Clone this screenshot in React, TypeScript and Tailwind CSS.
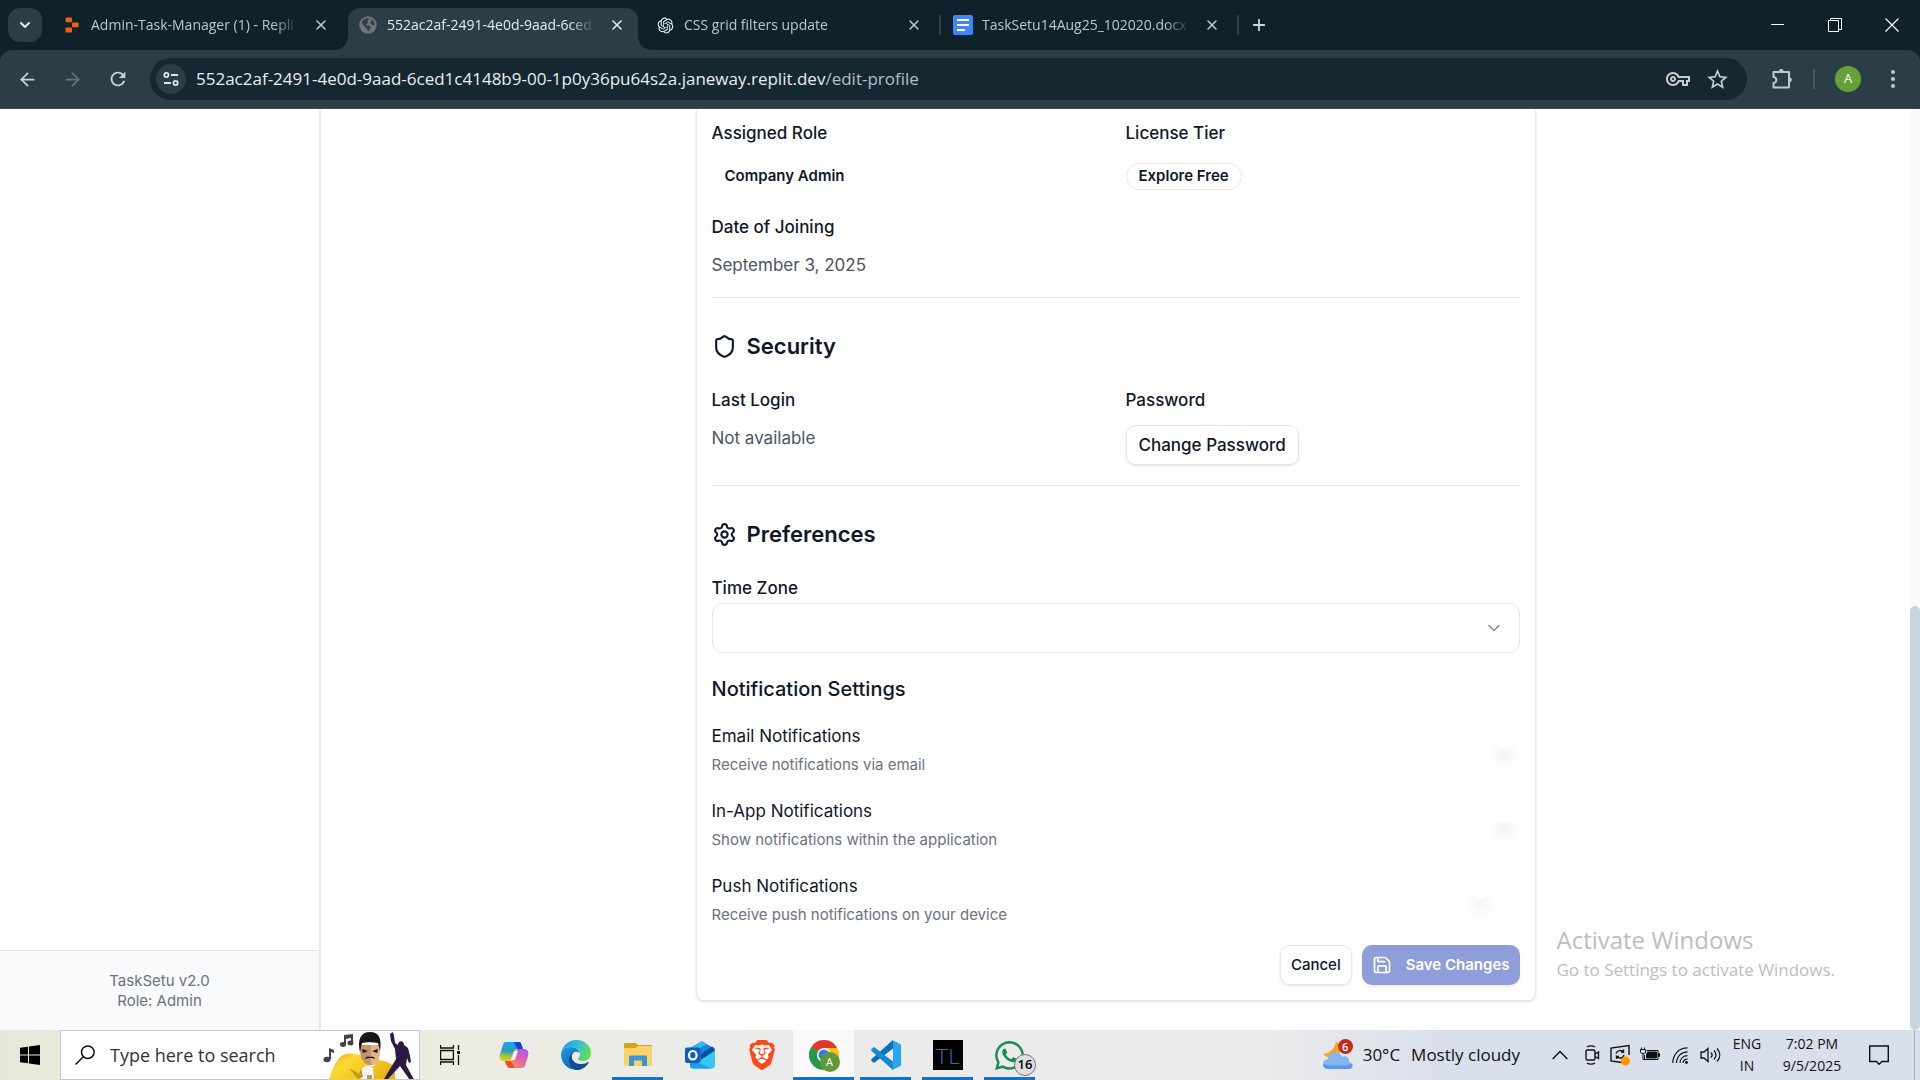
import React, { useState } from "react";
import { ArrowLeft, ArrowRight, ChevronDown, Save, Settings, Shield, X, Plus } from "lucide-react";
import { MdOutlineVpnKey, MdRefresh, MdStarBorder } from "react-icons/md";
import { FaWhatsapp } from "react-icons/fa";
import { RiOpenaiFill } from "react-icons/ri";
import { SiBrave } from "react-icons/si";

const ui = "font-['Open_Sans','Noto_Sans',sans-serif]";

/* ---------- browser icons ---------- */

function ReplitIcon() {
  return (
    <svg viewBox="0 0 14 16" className="h-4 w-[14px] shrink-0" fill="#f26207">
      <rect x="0.5" y="0.5" width="6.5" height="4.8" rx="1" />
      <rect x="7" y="5.5" width="6.5" height="4.8" rx="1" />
      <rect x="0.5" y="10.6" width="6.5" height="4.8" rx="1" />
    </svg>
  );
}

function GlobeIcon() {
  return (
    <svg viewBox="0 0 18 18" className="size-[18px] shrink-0">
      <circle cx="9" cy="9" r="8.7" fill="#6e7478" />
      <path d="M3 6.500C4 4 6 2.400 8.600 2.200L9.800 3.600 8.400 5.400 8.800 7 6.800 8.400 7.400 9.600 10.600 9.800 12 11.400 10.400 13 9.800 15.600C8.300 15.200 8.500 13 7.600 12.200 6.400 11 4 9.400 3 6.500Z" fill="#2b3d47" />
      <path d="M12.400 3.200C14.400 4.400 15.600 6.400 15.700 8.800L14 9.600 12.400 8 11 7.200 12.800 5.600Z" fill="#2b3d47" />
    </svg>
  );
}

function DocsIcon() {
  return (
    <svg viewBox="0 0 20 20" className="size-5 shrink-0">
      <rect width="20" height="20" rx="2" fill="#4285f4" />
      <path d="M4 5h12M4 10h12M4 15h8" stroke="#fff" strokeWidth="2.2" />
    </svg>
  );
}

function TuneIcon() {
  return (
    <svg viewBox="0 0 16 16" className="size-4" fill="none" stroke="#dce5ea" strokeWidth="1.8">
      <circle cx="3.4" cy="4" r="2.1" />
      <path d="M8 4h7M1 12h7" />
      <circle cx="12.6" cy="12" r="2.1" />
    </svg>
  );
}

function PuzzleIcon() {
  return (
    <svg viewBox="0 0 22 22" className="size-[22px]" fill="none" stroke="#b9ccd6" strokeWidth="2" strokeLinejoin="round">
      <path d="M2.500 4H18v15.500H2.500V15c3.800-.4 3.800-5.600 0-6Z" />
      <path d="M7.900 3.500a2.400 2.400 0 0 1 4.800 0ZM18.500 9.400a2.400 2.400 0 0 1 0 4.800Z" fill="#b9ccd6" stroke="none" />
    </svg>
  );
}

/* ---------- browser frame ---------- */

type TabProps = { icon: React.ReactNode; title: string; active?: boolean; divider?: boolean };

function Tab({ icon, title, active, divider }: TabProps) {
  return (
    <div
      className={
        active
          ? "relative mt-2 flex h-[42px] w-[290px] items-center rounded-t-xl bg-[#2b3d47] pr-[11px] pl-[10px] text-[#e3ebef]"
          : "relative mt-2 flex h-[42px] w-[298px] items-center pr-[17px] pl-[12px] text-[#b7c8d1]"
      }
    >
      {active && (
        <>
          <span className="absolute bottom-0 -left-3 size-3 bg-[radial-gradient(circle_at_0_0,transparent_11px,#2b3d47_12px)]" />
          <span className="absolute -right-3 bottom-0 size-3 bg-[radial-gradient(circle_at_100%_0,transparent_11px,#2b3d47_12px)]" />
        </>
      )}
      <span className="mb-2 flex w-5 shrink-0 justify-center">{icon}</span>
      <span className="mr-3 mb-2 ml-[9px] min-w-0 flex-1 overflow-hidden text-sm leading-5 whitespace-nowrap [mask-image:linear-gradient(to_right,black_88%,transparent)]">
        {title}
      </span>
      <button aria-label="Close tab" className="mb-2 flex size-5 items-center justify-center">
        <X size={16} strokeWidth={2.4} />
      </button>
      {divider && <span className="absolute top-[7px] right-0 h-5 w-0.5 rounded bg-[#2f434d]" />}
    </div>
  );
}

function TabStrip() {
  return (
    <div className="flex h-[50px] bg-[#0f222b]">
      <button aria-label="Search tabs" className="mt-2 ml-2 flex h-[34px] w-[34px] shrink-0 items-center justify-center rounded-xl bg-[#2b3d47]">
        <ChevronDown size={16} strokeWidth={3} color="#e3ebef" />
      </button>
      <div className="ml-2 flex">
        <Tab icon={<ReplitIcon />} title="Admin-Task-Manager (1) - Repli" />
        <Tab icon={<GlobeIcon />} title="552ac2af-2491-4e0d-9aad-6ced" active />
        <div className="w-[5px]" />
        <Tab icon={<RiOpenaiFill size={19} color="#eef2f4" />} title="CSS grid filters update" divider />
        <Tab icon={<DocsIcon />} title="TaskSetu14Aug25_102020.docx" divider />
      </div>
      <button aria-label="New tab" className="mt-[15px] ml-[10px] flex size-5 items-center justify-center text-[#c9d7de]">
        <Plus size={18} strokeWidth={2.4} />
      </button>
      <div className="ml-auto flex h-[50px] items-center">
        <button aria-label="Minimize" className="flex h-full w-[57px] items-center justify-center">
          <svg viewBox="0 0 14 14" className="size-[14px]" stroke="#fff"><path d="M0 6.500h13" /></svg>
        </button>
        <button aria-label="Restore" className="flex h-full w-[57px] items-center justify-center">
          <svg viewBox="0 0 14 14" className="size-[14px]" fill="none" stroke="#fff"><path d="M.5 2.500h10v11H.5zM2.500 2.500v-2h11v11h-3" /></svg>
        </button>
        <button aria-label="Close window" className="flex h-full w-[57px] items-center justify-center">
          <svg viewBox="0 0 14 14" className="size-[14px]" stroke="#fff" strokeWidth="1.200"><path d="M.5.5l13 13M13.500.5l-13 13" /></svg>
        </button>
      </div>
    </div>
  );
}

function Toolbar() {
  return (
    <div className="bg-[#0f222b]">
      <div className="flex h-[59px] items-center rounded-t-xl border-b border-[#454a50] bg-[#2b3d47]">
        <div className="flex w-[150px] items-center gap-6 pl-[17px]">
          <button aria-label="Back"><ArrowLeft size={21} color="#c4d4dc" /></button>
          <button aria-label="Forward"><ArrowRight size={21} color="#64757e" /></button>
          <button aria-label="Reload"><MdRefresh size={22} color="#c4d4dc" /></button>
        </div>
        <div className="flex h-[42px] flex-1 items-center rounded-full bg-[#152831] pr-[17px] pl-[6px]">
          <button aria-label="View site information" className="flex size-[30px] items-center justify-center rounded-full bg-[#2b3d47]">
            <TuneIcon />
          </button>
          <span className="ml-[10px] flex-1 text-[17px] leading-6 text-[#e8eef1]">
            552ac2af-2491-4e0d-9aad-6ced1c4148b9-00-1p0y36pu64s2a.janeway.replit.dev<span className="text-[#b6bfc4]">/edit-profile</span>
          </span>
          <button aria-label="Passwords"><MdOutlineVpnKey size={24} color="#c7cdd1" /></button>
          <button aria-label="Bookmark" className="ml-[15px]"><MdStarBorder size={25} color="#c7cdd1" /></button>
        </div>
        <div className="flex w-[173px] items-center">
          <button aria-label="Extensions" className="ml-6"><PuzzleIcon /></button>
          <span className="ml-[20px] h-5 w-0.5 bg-[#435965]" />
          <button aria-label="Profile" className="ml-5 flex size-[26px] items-center justify-center rounded-full bg-[#679f38] text-[13px] text-white">A</button>
          <button aria-label="Menu" className="ml-[22px]">
            <svg viewBox="0 0 20 20" className="size-5" fill="#b9ccd6"><circle cx="10" cy="3" r="2" /><circle cx="10" cy="10" r="2" /><circle cx="10" cy="17" r="2" /></svg>
          </button>
        </div>
      </div>
    </div>
  );
}

/* ---------- profile page ---------- */

function Toggle({ id, initial }: { id: string; initial: boolean }) {
  const [on, setOn] = useState(initial);
  return (
    <button
      id={id}
      role="switch"
      aria-checked={on}
      onClick={() => setOn(!on)}
      className={on ? "flex h-[30px] w-[55px] items-center justify-end rounded-full px-[3px]" : "flex h-[30px] w-[55px] items-center rounded-full px-[3px]"}
    >
      <span className="size-[25px] rounded-full bg-white shadow-[0_25px_16px_4px_rgba(0,0,0,0.012),0_18px_10px_-3px_rgba(0,0,0,0.03)]" />
    </button>
  );
}

const notifications = [
  { id: "email", title: "Email Notifications", note: "Receive notifications via email", on: true },
  { id: "in-app", title: "In-App Notifications", note: "Show notifications within the application", on: true },
  { id: "push", title: "Push Notifications", note: "Receive push notifications on your device", on: false },
];

const label = "text-[17px] leading-6 font-medium";
const value = "text-[17px] leading-6 text-[#4b5563]";
const heading = "flex items-center gap-[10px] text-[22px] leading-8 font-semibold";

function ProfileCard() {
  return (
    <div className="mx-auto w-full max-w-[840px] rounded-b-lg border border-t-0 border-[#e5e7eb] bg-white px-[15px] pt-3 pb-[15px] shadow-sm">
      <div className="grid grid-cols-2 gap-x-5">
        <div>
          <p className={label}>Assigned Role</p>
          <span className="mt-[18px] inline-flex h-[27px] items-center px-[13px] text-[15px] font-semibold">Company Admin</span>
        </div>
        <div>
          <p className={label}>License Tier</p>
          <span className="mt-[18px] inline-flex h-[27px] items-center rounded-full border border-[#e5e7eb] px-3 text-[15px] font-semibold">Explore Free</span>
        </div>
      </div>
      <p className={`mt-[25px] ${label}`}>Date of Joining</p>
      <p className={`mt-[14px] ${value}`}>September 3, 2025</p>
      <hr className="mt-5 border-[#e5e7eb]" />

      <h2 className={`mt-8 ${heading}`}><Shield size={25} />Security</h2>
      <div className="mt-[26px] grid grid-cols-2 gap-x-5">
        <div>
          <p className={label}>Last Login</p>
          <p className={`mt-[14px] ${value}`}>Not available</p>
        </div>
        <div>
          <p className={label}>Password</p>
          <button className="mt-[13px] flex h-10 items-center rounded-[10px] border border-[#e5e7eb] px-3 pt-0.5 text-[17px] font-medium shadow-sm">Change Password</button>
        </div>
      </div>
      <hr className="mt-5 border-[#e5e7eb]" />

      <h2 className={`mt-8 ${heading}`}><Settings size={25} />Preferences</h2>
      <label htmlFor="tz" className={`mt-[26px] block ${label}`}>Time Zone</label>
      <div className="relative mt-[3px]">
        <select id="tz" defaultValue="" className="h-[50px] w-full appearance-none rounded-[10px] border border-[#e5e7eb] bg-white px-4 text-[17px]">
          <option value="" />
          <option value="UTC">UTC</option>
        </select>
        <ChevronDown size={20} strokeWidth={1.8} color="#858a94" className="pointer-events-none absolute top-[15px] right-4" />
      </div>
      <h3 className="mt-[22px] text-xl leading-7 font-medium">Notification Settings</h3>
      <div className="mt-[17px] flex flex-col gap-5">
        {notifications.map((n) => (
          <div key={n.id} className="flex items-start justify-between">
            <div className="pt-1">
              <label htmlFor={n.id} className="block text-[17px] leading-6">{n.title}</label>
              <p className="mt-[7px] text-[15px] leading-5 text-[#6b7280]">{n.note}</p>
            </div>
            <Toggle id={n.id} initial={n.on} />
          </div>
        ))}
      </div>
      <div className="mt-5 flex justify-end gap-[10px]">
        <button className="flex h-10 items-center rounded-[10px] border border-[#e5e7eb] px-[10px] text-[15px] font-medium shadow-sm">Cancel</button>
        <button className="flex h-10 items-center gap-[14px] rounded-[10px] bg-[#8f9ed8] px-[10px] text-[15px] font-semibold text-white shadow-md shadow-black/5">
          <Save size={20} />
          Save Changes
        </button>
      </div>
    </div>
  );
}

function Page() {
  return (
    <div className="relative flex min-h-0 flex-1 overflow-hidden bg-white font-['Inter',sans-serif] text-[#0f172a]">
      <aside className="flex w-[321px] shrink-0 flex-col border-r-2 border-[#e5e7eb] bg-white">
        <div className="flex-1" />
        <div className="flex h-20 flex-col items-center justify-center border-t border-[#e5e7eb] bg-[#f8fafc] text-[15px] leading-5 text-[#6b7280]">
          <p>TaskSetu v2.0</p>
          <p>Role: Admin</p>
        </div>
      </aside>
      <main className="flex-1 bg-white">
        <ProfileCard />
      </main>
      <div className="flex w-[10px] shrink-0 flex-col justify-end bg-[#f8fafc]">
        <div className="h-[46%] rounded-full bg-[#cbd5e1]" />
      </div>
      <div className={`absolute right-[85px] bottom-[46px] text-[#bdbdbd] ${ui}`}>
        <p className="text-2xl leading-8">Activate Windows</p>
        <p className="text-[17px] leading-7">Go to Settings to activate Windows.</p>
      </div>
    </div>
  );
}

/* ---------- taskbar ---------- */

function SearchArt() {
  return (
    <svg viewBox="0 0 96 48" className="h-12 w-24 shrink-0">
      <defs>
        <linearGradient id="jacket" x1="0" y1="0" x2="1" y2="0.500"><stop offset="0" stopColor="#e0a80c" /><stop offset=".35" stopColor="#fbd936" /><stop offset="1" stopColor="#eab612" /></linearGradient>
      </defs>
      <g fill="#46404f">
        <ellipse cx="4" cy="28.500" rx="3.500" ry="2.700" /><path d="M6 28V17l5 2v3l-3-1v7Z" />
        <ellipse cx="20" cy="13.500" rx="3" ry="2.400" /><ellipse cx="27.500" cy="12" rx="3" ry="2.400" /><path d="M21 13V4l9-1v9h-2V7l-5 1v5Z" />
      </g>
      <path d="M6 48C10 37 14 27 20 24c6-3 13-1 19 1l5 8 6 3 5-7c9 1 15 4 17 8v11Z" fill="url(#jacket)" />
      <path d="M37 48l2-11 6-3 5 3 1 11Z" fill="#f4f2f6" />
      <path d="M26 37l10 6 2-5 2 8-5 2Z" fill="#c9960a" />
      <path d="M44 44h5v4h-5Z" fill="#b9a23c" />
      <path d="M37 14h19c1 8 1 14-3 18-3 3-8 3-11 0-5-4-5-10-5-18Z" fill="#c79368" />
      <path d="M48 14h8c1 8 1 14-3 18-2 1-3 2-5 2Z" fill="#e0b488" />
      <path d="M37 21C34 8 38 1 47 1s12 6 10 19l-2-8c-5-1-12-1-16 0Z" fill="#18151a" />
      <path d="M39 18l6 2-5 2ZM55 18l-6 2 5 2ZM42 28c1-3 3-3 5-2 2-1 4-1 5 2l-3-1h-4Z" fill="#1a1416" />
      <path d="M67 3l3-2 1 4 1 7 3 2c0-5 6-5 6 0l4 3 2 8 1 6-2 1-2-5-1 7 10 18h-4L77 35 65 48h-4l12-20-1-10-4-8Z" fill="#2b1b42" />
    </svg>
  );
}

function CopilotIcon() {
  return (
    <svg viewBox="0 0 30 28" className="h-7 w-[30px]">
      <defs>
        <linearGradient id="cpA" x1="0.3" y1="0" x2="0.2" y2="1"><stop offset="0" stopColor="#1ba4f0" /><stop offset=".45" stopColor="#2a9bc0" /><stop offset=".75" stopColor="#9fc93a" /><stop offset="1" stopColor="#f5c826" /></linearGradient>
        <linearGradient id="cpB" x1="0.8" y1="0" x2="0.3" y2="1"><stop offset="0" stopColor="#a55af0" /><stop offset=".5" stopColor="#e85fa8" /><stop offset="1" stopColor="#ff8f50" /></linearGradient>
      </defs>
      <path d="M7 1h13c2 0 2 2 3 4l1 3h-5c-3 0-4 2-5 6l-2 6H5c-4 0-5-3-4-7L4 4c.5-2 1-3 3-3Z" fill="url(#cpA)" />
      <path d="M14 1h6c2 0 2 2 3 4l1 3h-5c-2 0-3-7-5-7Z" fill="#1846c8" />
      <path d="M23 27H11c-2 0-3-2-4-4l-1-3h5c3 0 4-2 5-6l2-6h7c4 0 5 3 4 7l-3 9c-.5 2-1 3-3 3Z" fill="url(#cpB)" />
      <path d="M6 20h5c2 0 3 7 6 7h-6c-2 0-3-2-4-4Z" fill="#e8502e" />
      <path d="M15 10h4l-3 9h-4Z" fill="#eeeeec" />
    </svg>
  );
}

function EdgeIcon() {
  return (
    <svg viewBox="0 0 30 30" className="size-[30px]">
      <defs>
        <linearGradient id="edT" x1="0" y1="0.300" x2="1" y2="0.600"><stop offset="0" stopColor="#1b9de2" /><stop offset=".5" stopColor="#35c1d0" /><stop offset="1" stopColor="#66e04a" /></linearGradient>
        <linearGradient id="edL" x1="0" y1="0" x2="0.600" y2="1"><stop offset="0" stopColor="#1a9be0" /><stop offset="1" stopColor="#0f62b4" /></linearGradient>
      </defs>
      <path d="M.5 12C2 5 8 0 15 0c9 0 15 6 15 13 0 5-4 8-8 8-3 0-5-1-5-2s2-2 2-5c0-4-4-7-9-7-5 0-8 2-9.500 5Z" fill="url(#edT)" />
      <path d="M0 15C0 10 4 7 9.500 7c5 0 9 3 9 6-4-3-8 0-8 5 0 5 4 9 9 11A15 15 0 0 1 0 15Z" fill="url(#edL)" />
      <path d="M12 13c-3 3-1 11 8 11 3 0 6-1 7-2 .6-.3 1 .1.700.7C25 27 21 30 16 30c-5-1-8-6-8-10 0-3 2-6 4-7Z" fill="#124c8d" />
    </svg>
  );
}

function FolderIcon() {
  return (
    <svg viewBox="0 0 28 24" className="h-6 w-7">
      <path d="M0 1.500C0 .6.6 0 1.500 0H12l2 2h12.500c.9 0 1.500.6 1.500 1.500V22H0Z" fill="#e2a00a" />
      <path d="M0 5h11l3-2h12.500c.9 0 1.500.6 1.500 1.500V21.500c0 .9-.6 1.500-1.500 1.500h-25C.6 23 0 22.400 0 21.500Z" fill="#fdd367" />
      <path d="M5 23V14c0-1 .6-1.600 1.600-1.600h14.800c1 0 1.600.6 1.600 1.600v9h-5v-5.500h-8V23Z" fill="#3d94d6" />
    </svg>
  );
}

function OutlookIcon() {
  return (
    <svg viewBox="0 0 30 28" className="h-7 w-[30px]">
      <path d="M5 7 15 1.200c1.300-.9 2.500-.9 3.800 0L29 7.500l1 2.500-14 10H5Z" fill="#1c84dc" />
      <path d="M5 7 15 1.200c1.300-.9 2.500-.9 3.800 0L22 3 10 10Z" fill="#35b8f1" />
      <path d="M16 13 27 5.500l2 1.500c1 .8 1 2 0 3L16 19Z" fill="#0a4ea2" />
      <path d="M30 10v14.500c0 2-1 3-3 3H8c-2 0-3-1-3-3V20h9Z" fill="#35c8f2" />
      <path d="M5 22h9l13 5.500H8c-2 0-3-1-3-3Z" fill="#1aa0ea" />
      <rect y="6.500" width="15.500" height="15.500" rx="2" fill="#0f5fbf" />
      <ellipse cx="7.800" cy="14.200" rx="3.800" ry="4.200" fill="none" stroke="#fff" strokeWidth="2.200" />
    </svg>
  );
}

function BraveIcon() {
  return (
    <span className="relative flex items-center justify-center">
      <span className="absolute size-4 rounded-full bg-white" />
      <SiBrave size={30} color="#fb4a1c" className="relative" />
    </span>
  );
}

function ChromeIcon() {
  return (
    <span className="relative">
      <svg viewBox="0 0 30 30" className="size-[30px]">
        <path d="M15 15 2 7.500A15 15 0 0 1 28 7.500Z" fill="#dc3b2e" />
        <path d="M15 15 28 7.500A15 15 0 0 1 15 30Z" fill="#fbc116" />
        <path d="M15 15 15 30A15 15 0 0 1 2 7.500Z" fill="#27984a" />
        <path d="M15 8h13.300L21.500 19Z" fill="#fbc116" />
        <path d="M2 7.500 8.700 18.500 15 15Z" fill="#27984a" />
        <circle cx="15" cy="15" r="7" fill="#fff" />
        <circle cx="15" cy="15" r="5.500" fill="#3b78e7" />
      </svg>
      <span className="absolute -right-px -bottom-0.5 flex size-5 items-center justify-center rounded-full bg-[#5f9a38] text-[11px] text-white">A</span>
    </span>
  );
}

function CodeIcon() {
  return (
    <svg viewBox="0 0 30 30" className="size-[30px]">
      <path d="M22 8.500 4 22.300c-.6.500-1.400.4-1.900 0L.6 20.900c-.6-.6-.6-1.500 0-2L22 0Z" fill="#0b72b9" />
      <path d="M22 21.500 4 7.700c-.6-.5-1.400-.4-1.900 0L.6 9.100c-.6.6-.6 1.500 0 2L22 30Z" fill="#1689d0" />
      <path d="M21.500.3 29 3.800c.6.300 1 .9 1 1.600v19.200c0 .7-.4 1.300-1 1.600l-7.500 3.500c-.8.300-1.400.2-2-.4 1 .9 2.500.2 2.500-1.200V1.900C22 .6 20.500-.1 19.500.8c.6-.6 1.200-.8 2-.5Z" fill="#29a6f2" />
    </svg>
  );
}

function AppButton({ name, open, active, children }: { name: string; open?: boolean; active?: boolean; children: React.ReactNode }) {
  return (
    <button
      aria-label={name}
      className={
        active
          ? "relative flex h-full w-[61px] items-center justify-center bg-white/70"
          : "relative flex h-full w-[51px] items-center justify-center"
      }
    >
      {children}
      {open && <span className="absolute inset-x-0 bottom-0 h-[3px] bg-[#0078d7]" />}
    </button>
  );
}

function Taskbar() {
  return (
    <footer className={`flex h-[50px] shrink-0 items-center bg-[linear-gradient(to_right,#e8e8da_0%,#ecece3_25%,#ebebeb_40%,#ebebeb_66%,#dadfec_75%,#dadfec_100%)] text-[#111] ${ui}`}>
      <button aria-label="Start" className="flex h-full w-[60px] items-center justify-center">
        <svg viewBox="0 0 20 20" className="size-5"><path d="M0 2.800 8 1.700V9.500H0ZM9 1.600 20 0V9.500H9ZM0 10.500H8v7.800L0 17.200ZM9 10.500H20V20L9 18.400Z" /></svg>
      </button>
      <label className="flex h-full w-[360px] items-center border border-[#c9c9c9] bg-white pl-[14px]">
        <svg viewBox="0 0 20 20" className="size-5 shrink-0" fill="none" stroke="#111" strokeWidth="1.500"><circle cx="12.800" cy="7.200" r="6.300" /><path d="M8.300 11.700.5 19.500" /></svg>
        <input type="text" aria-label="Search" placeholder="Type here to search" className="ml-[15px] min-w-0 flex-1 bg-transparent text-lg outline-none placeholder:text-[#333]" />
        <SearchArt />
      </label>
      <AppButton name="Task view">
        <svg viewBox="0 0 20 20" className="ml-2 size-5 shrink-0" fill="none" stroke="#111" strokeWidth="1.300"><path d="M.6 5.500h12.800v9H.6zM.6 0v3h12.800V0M.6 20v-3h12.800v3M18.500 0v5M18.500 10v10" /><path d="M17 6h3v3h-3z" fill="#111" stroke="none" /></svg>
      </AppButton>
      <div className="ml-[17px] flex h-full">
        <div className="mr-[6px] flex h-full gap-[11px]">
          <AppButton name="Copilot"><CopilotIcon /></AppButton>
          <AppButton name="Edge"><EdgeIcon /></AppButton>
          <AppButton name="File Explorer" open><FolderIcon /></AppButton>
          <AppButton name="Outlook"><OutlookIcon /></AppButton>
          <AppButton name="Brave"><BraveIcon /></AppButton>
        </div>
        <AppButton name="Chrome" open active><ChromeIcon /></AppButton>
        <div className="ml-[6px] flex h-full gap-[11px]">
          <AppButton name="Visual Studio Code" open><CodeIcon /></AppButton>
          <AppButton name="TL" open>
            <span className="flex size-[30px] items-center justify-center bg-black font-['Lato',sans-serif] text-[22px] font-light text-[#1a78c8]">TL</span>
          </AppButton>
          <AppButton name="WhatsApp" open>
            <FaWhatsapp size={33} color="#178c53" />
            <span className="absolute top-[24px] -right-px flex size-[22px] items-center justify-center rounded-full border border-[#777] bg-[#dfdfdf] text-[13px] font-semibold text-black">16</span>
          </AppButton>
        </div>
      </div>

      <div className="ml-auto flex h-full items-center">
        <button className="flex items-center text-[17px] leading-6">
          <span className="relative mr-[10px]">
            <svg viewBox="0 0 30 30" className="size-[30px]">
              <path d="M13 1c-1 7-5 12-13 13 3 4 9 5 14 2 4-3 5-9-1-15Z" fill="#f5a623" />
              <path d="M6 29c-8 0-8-9-1-10 1-8 12-9 14-2 4-2 8 1 7 5 6 2 4 7 0 7Z" fill="#86b6f2" />
              <path d="M6 29c-4 0-6-2-6-5 6 2 20 2 29 0 1 3-1 5-4 5Z" fill="#5f97e6" />
            </svg>
            <span className="absolute -top-px right-0 flex size-[15px] items-center justify-center rounded-full bg-[#c42b1c] text-[11px] leading-none font-semibold text-white">6</span>
          </span>
          <span className="mr-[11px]">30°C</span>
          <span>Mostly cloudy</span>
        </button>
        <div className="ml-[32px] flex items-center">
          <button aria-label="Show hidden icons">
            <svg viewBox="0 0 16 20" className="h-5 w-4" fill="none" stroke="#111" strokeWidth="1.500"><path d="M.7 14 8 6.500 15.300 14" /></svg>
          </button>
          <svg viewBox="0 0 16 20" className="ml-4 h-5 w-4" fill="none" stroke="#111" strokeWidth="1.400"><rect x="2" y="5" width="9" height="10" rx="1.500" /><path d="M11 9l3.500-2v6.500L11 11.500M3 2c2-1.500 6-1.500 8 0M3 18c2 1.500 6 1.500 8 0" /></svg>
          <svg viewBox="0 0 20 22" className="ml-[10px] h-[22px] w-5" fill="none" stroke="#111" strokeWidth="1.400"><path d="M12 18.500 1 17V4l18-2.500V11" /><path d="M6 9.500c1-3 5-4 7.500-1.500V5.500M13.500 8H11M14 11c-1 3.500-5 4-7.500 1.500V15M6.500 12.500H9" /><circle cx="15.500" cy="17" r="4.500" fill="#ff9800" stroke="none" /></svg>
          <svg viewBox="0 0 20 20" className="ml-[10px] size-5" fill="none" stroke="#111" strokeWidth="1"><path d="M6.500 5.500H18v9H4.500V10" /><path d="M7.500 7h9v6h-10V9.500ZM18.500 8.500h1v3h-1z" fill="#111" /><path d="M.5 4.500h5V7c0 2-5 2-5 0ZM1.500 4.500v-2M4.500 4.500v-2M3 8.500v6h2" /></svg>
          <svg viewBox="0 0 16 18" className="ml-3 h-[18px] w-4" fill="none" stroke="#111" strokeWidth="1.200"><path d="M.8 17C1 8 7 2 15.500 1.800M4.500 17c.3-7 5-11 11-11.200M8 17c.3-4.500 3.500-7.200 7.500-7.300M11 17c.2-2.300 2-3.700 4.500-3.800" /><circle cx="14.500" cy="16.500" r="1.400" fill="#111" stroke="none" /></svg>
          <svg viewBox="0 0 21 20" className="ml-3 h-5 w-[21px]" fill="none" stroke="#111" strokeWidth="1.300"><path d="M1 7h3l4-3.500v13L4 13H1ZM11 7.500c1.300 1.500 1.300 3.500 0 5M14 5.500c2.500 2.800 2.500 6.200 0 9M17 3.500c3.700 4 3.700 9 0 13" /></svg>
        </div>
        <button className="ml-[10px] flex w-[32px] flex-col items-center text-sm leading-[22px]"><span>ENG</span><span>IN</span></button>
        <button className="ml-4 flex w-[66px] flex-col items-center text-sm leading-[22px] whitespace-nowrap"><span>7:02 PM</span><span>9/5/2025</span></button>
        <button aria-label="Notifications" className="ml-[24px]">
          <svg viewBox="0 0 20 20" className="size-5" fill="none" stroke="#111" strokeWidth="1.400"><path d="M.7 1h18.600v15.500H13L10 19.300 7.500 16.500H.7Z" /></svg>
        </button>
        <span className="ml-[25px] h-full w-[6px] border-l border-[#a9b0bd]" />
      </div>
    </footer>
  );
}

export default function App() {
  return (
    <div className="flex h-screen flex-col overflow-hidden">
      <header className={`shrink-0 ${ui}`}>
        <TabStrip />
        <Toolbar />
      </header>
      <Page />
      <Taskbar />
    </div>
  );
}
